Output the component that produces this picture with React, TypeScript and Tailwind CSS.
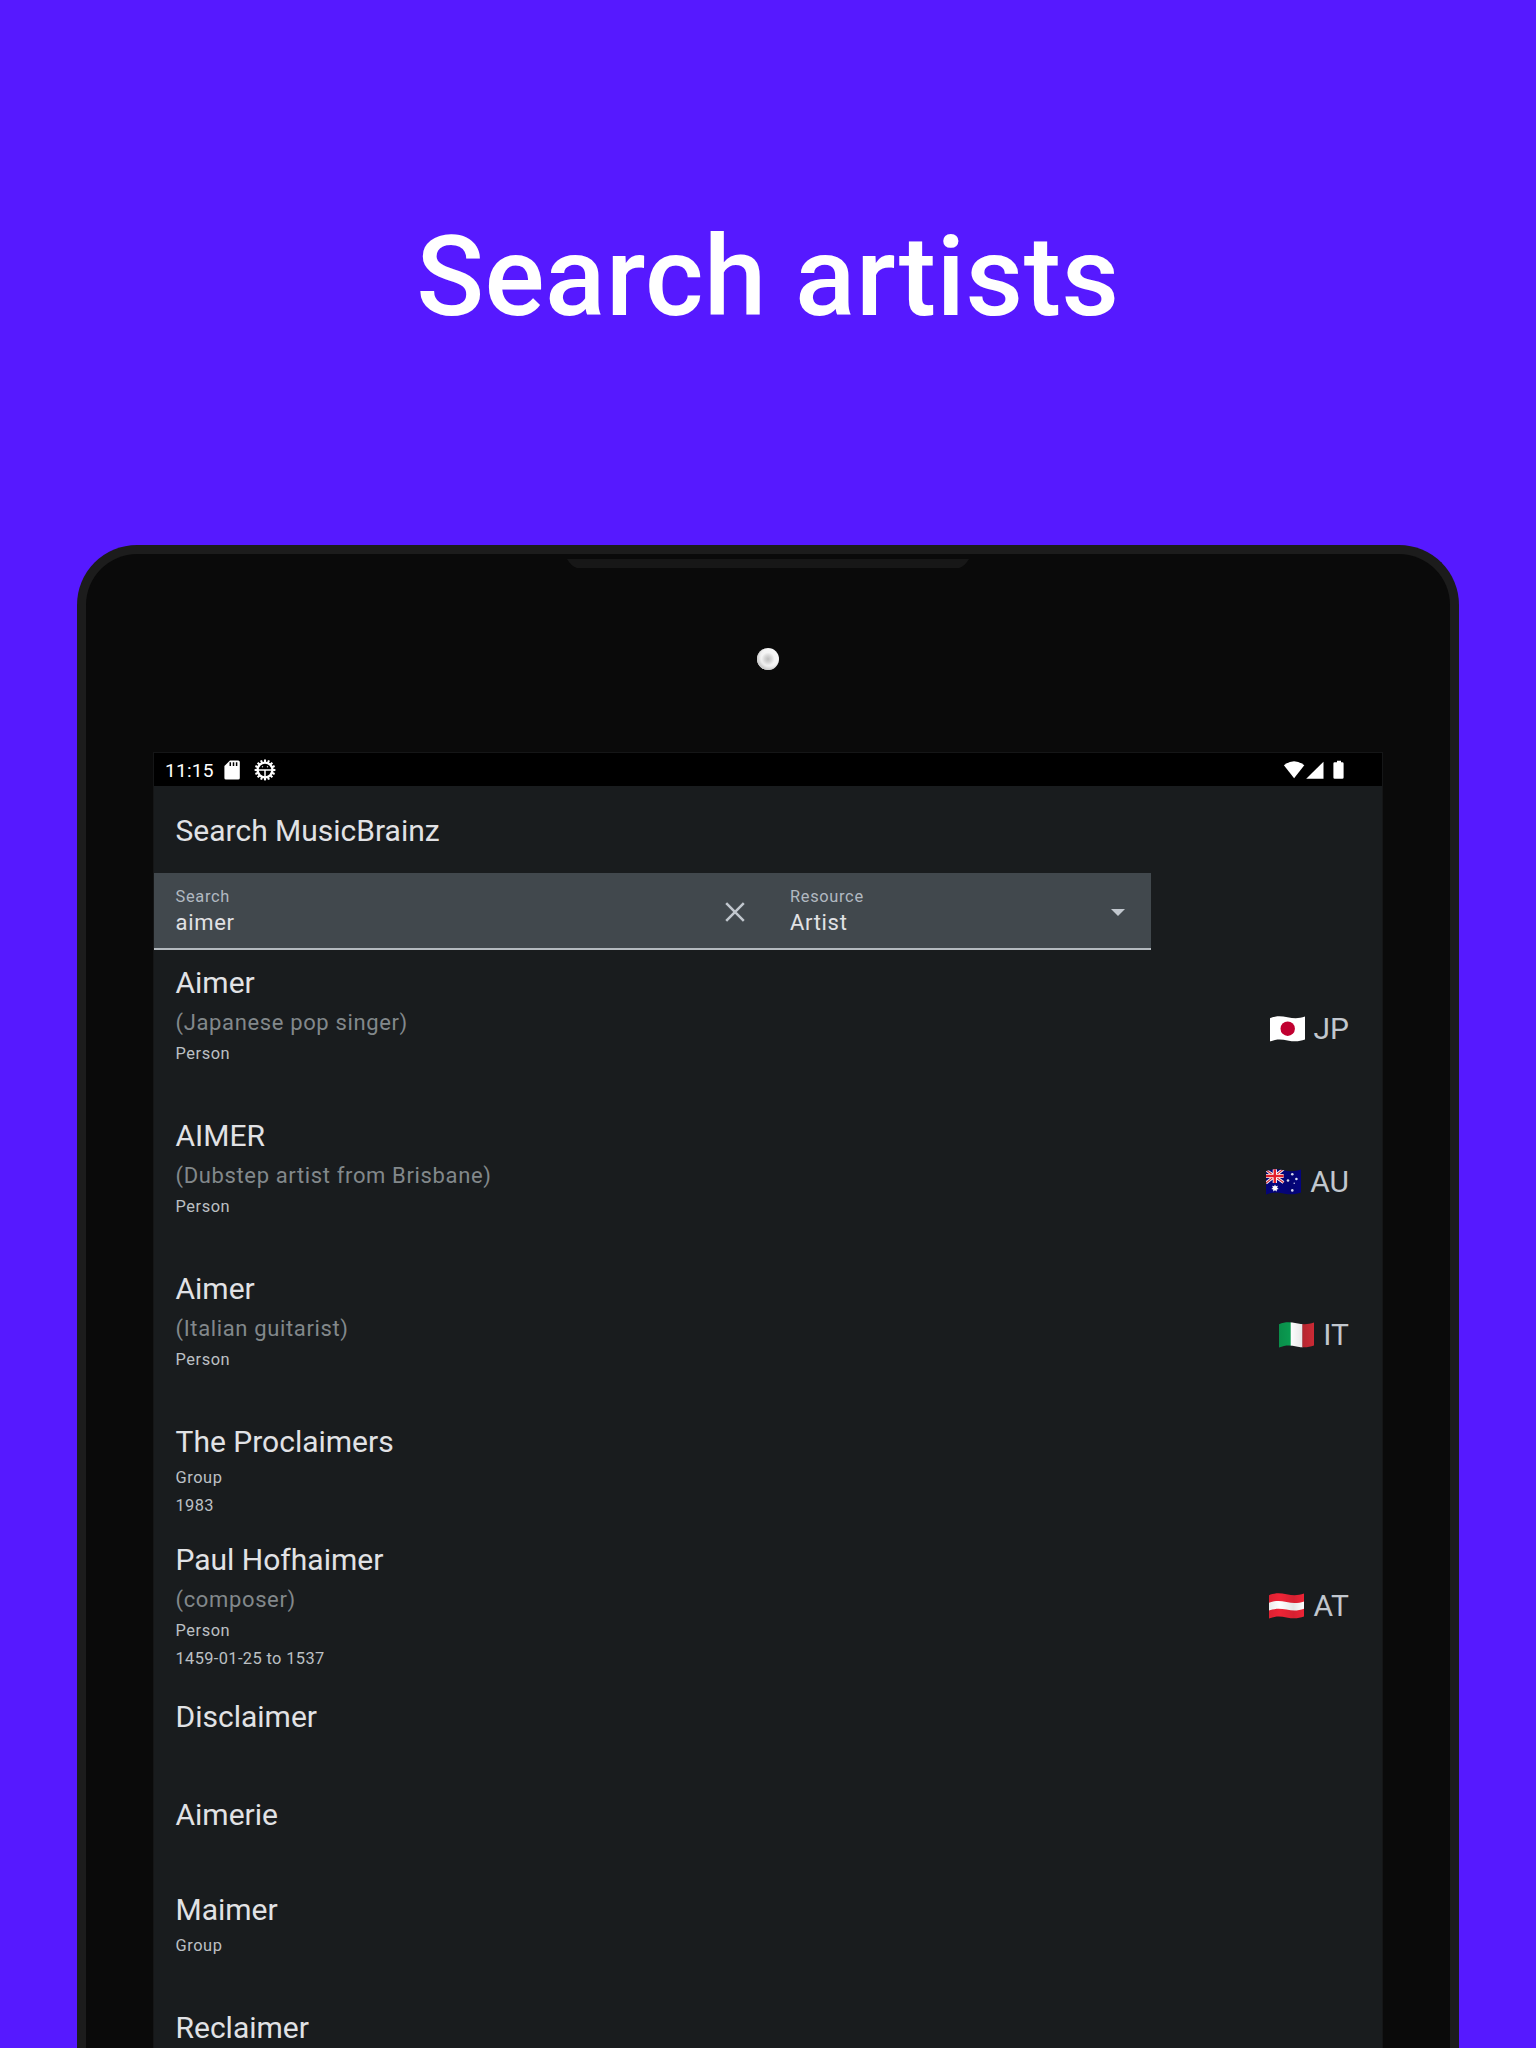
import type { ReactNode } from "react";

type Country = "JP" | "AU" | "IT" | "AT";

type Artist = {
  name: string;
  note?: string;
  kind?: string;
  dates?: string;
  country?: Country;
  height: string;
};

const artists: Artist[] = [
  { name: "Aimer", note: "(Japanese pop singer)", kind: "Person", country: "JP", height: "h-[153px]" },
  { name: "AIMER", note: "(Dubstep artist from Brisbane)", kind: "Person", country: "AU", height: "h-[153px]" },
  { name: "Aimer", note: "(Italian guitarist)", kind: "Person", country: "IT", height: "h-[153px]" },
  { name: "The Proclaimers", kind: "Group", dates: "1983", height: "h-[118px]" },
  { name: "Paul Hofhaimer", note: "(composer)", kind: "Person", dates: "1459-01-25 to 1537", country: "AT", height: "h-[157px]" },
  { name: "Disclaimer", height: "h-[98px]" },
  { name: "Aimerie", height: "h-[94.5px]" },
  { name: "Maimer", kind: "Group", height: "h-[118px]" },
  { name: "Reclaimer", height: "h-[98px]" },
];

const WAVE = "M0 2.2C6 -.4 11 -.2 17.5 1.2C24 2.6 29 2.6 35 .6V23.6C29 25.8 24 25.8 17.5 24.4C11 23 6 23 0 25.6Z";

function FlagArt({ code }: { code: Country }): ReactNode {
  if (code === "JP")
    return (
      <>
        <rect width="35" height="26" fill="#fff" />
        <circle cx="17.7" cy="12.7" r="7.2" fill="#c00030" />
      </>
    );
  if (code === "AU")
    return (
      <>
        <rect width="35" height="26" fill="#04047f" />
        <path d="M0 1L17.5 13.5M17.5 0L0 14" stroke="#fff" strokeWidth="3" />
        <path d="M0 1L17.5 13.5M17.5 0L0 14" stroke="#e0343e" strokeWidth="1.1" />
        <path d="M8.8 0V14M0 7H17.6" stroke="#fff" strokeWidth="4.2" />
        <path d="M8.8 0V14M0 7H17.6" stroke="#e8202c" strokeWidth="2.4" />
        <path d="M9 15.4l.9 1.9 2-.5-.8 1.9 1.6 1.2-2 .5.1 2L9 21.2l-1.8 1.2.1-2-2-.5 1.6-1.2-.8-1.9 2 .5z" fill="#fff" />
        <g fill="#e8eaff">
          <circle cx="26.3" cy="5.3" r="1.3" />
          <circle cx="22" cy="11.5" r="1.3" />
          <circle cx="30.4" cy="10" r="1.3" />
          <circle cx="28.2" cy="14.2" r=".7" />
          <circle cx="26.3" cy="21.4" r="1.3" />
        </g>
      </>
    );
  if (code === "IT")
    return (
      <>
        <rect width="12" height="26" fill="#0a9a50" />
        <rect x="11.7" width="12" height="26" fill="#fff" />
        <rect x="23.4" width="12" height="26" fill="#cb2a35" />
      </>
    );
  return (
    <>
      <rect width="35" height="26" fill="#ee2436" />
      <path d="M0 9.8C6 7.4 11 7.6 17.5 9C24 10.4 29 10.4 35 8.4V15.8C29 18 24 18 17.5 16.6C11 15.2 6 15.2 0 17.6Z" fill="#fff" />
    </>
  );
}

function Flag({ code }: { code: Country }) {
  return (
    <svg viewBox="0 0 35 26" className="h-[26px] w-[35px]">
      <clipPath id={`flag-${code}`}>
        <path d={WAVE} />
      </clipPath>
      <linearGradient id={`shade-${code}`}>
        <stop offset="0" stopColor="#000" stopOpacity=".08" />
        <stop offset=".3" stopColor="#000" stopOpacity="0" />
        <stop offset=".7" stopColor="#000" stopOpacity=".1" />
        <stop offset="1" stopColor="#000" stopOpacity="0" />
      </linearGradient>
      <g clipPath={`url(#flag-${code})`}>
        <FlagArt code={code} />
        {code !== "JP" && <rect width="35" height="26" fill={`url(#shade-${code})`} />}
      </g>
    </svg>
  );
}

const gearTeeth = Array.from({ length: 16 }, (_, i) => i * 22.5);

function StatusBar() {
  return (
    <div className="flex h-[33px] shrink-0 items-center bg-black pl-[11px] pr-[37px] text-white">
      <span className="w-[59px] pt-0.5 text-[19.2px] leading-[29px] tracking-[0.2px]">11:15</span>
      <svg viewBox="0 0 16 20" className="h-5 w-4">
        <path d="M6 .5h8.2q1.6 0 1.6 1.6v15.8q0 1.6-1.6 1.6H2q-1.6 0-1.6-1.6V6z" fill="#fff" />
        <path d="M6.3 2.3v3.8M9.5 2.3v3.8M12.6 2.3v3.8" stroke="#000" strokeWidth="1.5" />
      </svg>
      <svg viewBox="0 0 22 22" className="ml-3.5 h-[22px] w-[22px]">
        <g stroke="#fff" strokeWidth="2.1">
          {gearTeeth.map((a) => (
            <path key={a} d="M11 .6v3" transform={`rotate(${a} 11 11)`} />
          ))}
        </g>
        <circle cx="11" cy="11" r="7.4" fill="none" stroke="#fff" strokeWidth="2.4" />
        <path d="M4 11h14M11 11v8" stroke="#fff" strokeWidth="1.5" />
        <circle cx="8.5" cy="7.8" r=".7" fill="#ccc" />
        <circle cx="13.5" cy="7.8" r=".7" fill="#ccc" />
      </svg>
      <svg viewBox="0 0 62 20" className="ml-auto h-5 w-[62px]" fill="#fff">
        <path d="M.9 5.3Q11 -2.8 21.3 5.3L11.1 18.2z" />
        <path d="M40.5 1.7V18.8H23.2z" />
        <path d="M54 .8h4v1.5h1.3q1.3 0 1.3 1.3v13.9q0 1.3-1.3 1.3h-7.6q-1.3 0-1.3-1.3V3.6q0-1.3 1.3-1.3H54z" />
      </svg>
    </div>
  );
}

function SearchBar() {
  return (
    <div className="flex h-[77px] w-[996.5px] shrink-0 border-b-2 border-[#b4babf] bg-[#41484d]">
      <div className="flex w-[614px] items-center justify-between pl-[21.5px] pr-[23px]">
        <Field label="Search" value="aimer" />
        <svg viewBox="0 0 20 20" className="mt-0.5 h-5 w-5">
          <path d="M1.2 1.2l17.6 17.6M18.8 1.2L1.2 18.8" stroke="#c1c7ce" strokeWidth="2.5" />
        </svg>
      </div>
      <div className="flex flex-1 items-center justify-between pl-[22px] pr-[25.5px]">
        <Field label="Resource" value="Artist" />
        <svg viewBox="0 0 14 7" className="mt-[3px] h-[7px] w-3.5">
          <path d="M0 0h14L7 7z" fill="#c1c7ce" />
        </svg>
      </div>
    </div>
  );
}

function Field({ label, value }: { label: string; value: string }) {
  return (
    <div className="flex flex-col pt-[3px]">
      <span className="text-[16.4px] leading-[22px] tracking-[0.68px] text-[#b1b9c1]">{label}</span>
      <span className="text-[22px] leading-[30px] tracking-[0.68px] text-[#e1e2e5]">{value}</span>
    </div>
  );
}

function ArtistRow({ artist }: { artist: Artist }) {
  return (
    <li className={`flex shrink-0 justify-between pl-[21.5px] pr-[33px] pt-3 ${artist.height}`}>
      <div className="flex flex-col">
        <span className="text-[30px] leading-[38px] text-[#e1e2e5]">{artist.name}</span>
        {artist.note && (
          <span className="-mb-0.5 mt-1 text-[22px] leading-[33px] tracking-[0.64px] text-[#82888b]">
            {artist.note}
          </span>
        )}
        <div className="flex flex-col pt-[3px] text-[16.4px] leading-[27.5px] text-[#bcc0c4]">
          {artist.kind && <span className="tracking-[0.55px]">{artist.kind}</span>}
          {artist.dates && <span className="tracking-[0.38px]">{artist.dates}</span>}
        </div>
      </div>
      {artist.country && (
        <div className="mt-[45.5px] flex h-[38px] items-center gap-[9px] text-[30px] leading-[38px] text-[#c1c7ce]">
          <Flag code={artist.country} />
          <span>{artist.country}</span>
        </div>
      )}
    </li>
  );
}

export default function App() {
  return (
    <main className="flex h-[2048px] w-[1536px] flex-col items-center overflow-hidden bg-[#5619ff] font-['Roboto',sans-serif]">
      <h1 className="flex h-[545px] shrink-0 items-start pt-[211px] text-[112px] font-[530] leading-[131px] tracking-[0.5px] text-white">
        Search artists
      </h1>
      <section className="flex h-[1503px] w-[1382px] shrink-0 flex-col items-center overflow-hidden rounded-t-[60px] border-x-[9px] border-t-[9px] border-[#1c1c1c] bg-[#0a0a0a]">
        <svg viewBox="0 0 402 9" className="mt-[5px] h-[9px] w-[402px] shrink-0">
          <path d="M0 0H402Q398 7 392 9H10Q4 7 0 0Z" fill="#171717" />
        </svg>
        <div className="mt-20 h-[22px] w-[22px] shrink-0 rounded-full bg-[radial-gradient(circle_at_50%_50%,#bdbdbd_0%,#d6d6d6_22%,#f4f4f4_42%,#fcfcfc_100%)] shadow-[inset_2px_-2px_3px_#c9c9c9]" />
        <div className="mt-[82px] flex w-[1230px] flex-1 flex-col overflow-hidden border-x border-t border-[#151617] bg-[#191c1e]">
          <StatusBar />
          <header className="flex h-[87px] shrink-0 items-center pl-[21.5px] pt-[3px]">
            <h2 className="text-[30px] leading-[38px] text-[#e1e2e5]">Search MusicBrainz</h2>
          </header>
          <SearchBar />
          <ul className="flex flex-col pt-0.5">
            {artists.map((artist, i) => (
              <ArtistRow key={i} artist={artist} />
            ))}
          </ul>
        </div>
      </section>
    </main>
  );
}
